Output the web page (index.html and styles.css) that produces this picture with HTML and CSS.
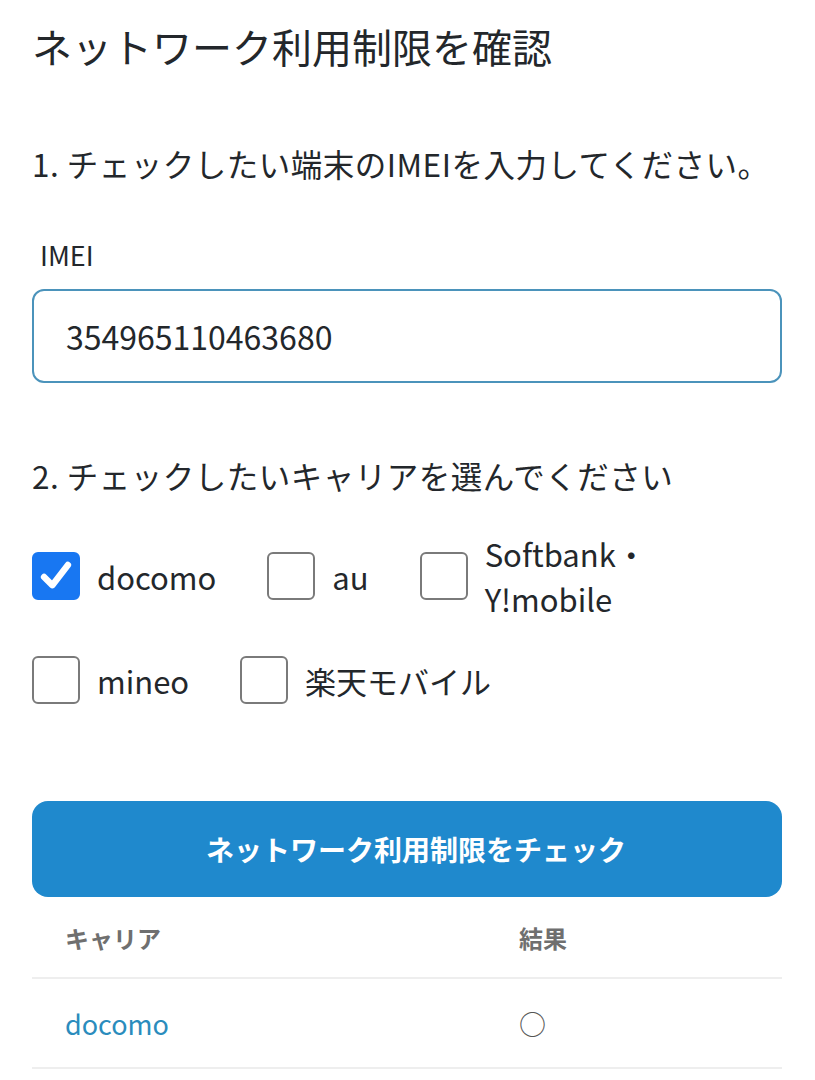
FILE: index.html
```html
<!DOCTYPE html>
<html lang="ja">
<head>
<meta charset="utf-8">
<title>ネットワーク利用制限を確認</title>
<link rel="stylesheet" href="styles.css">
</head>
<body>
<main class="page">
  <h1 class="title">ネットワーク利用制限を確認</h1>

  <h2 class="step">1. チェックしたい端末のIMEIを入力してください。</h2>
  <label class="field-label" for="imei">IMEI</label>
  <div class="input">354965110463680</div>

  <h2 class="step step-2">2. チェックしたいキャリアを選んでください</h2>

  <div class="carriers">
    <div class="carrier">
      <span class="box checked">
        <svg viewBox="0 0 48 48" width="48" height="48"><path d="M11 25 L20 34 L37 12" fill="none" stroke="#fff" stroke-width="7" stroke-linecap="round" stroke-linejoin="round"/></svg>
      </span>
      <span class="clabel">docomo</span>
    </div>
    <div class="carrier">
      <span class="box"></span>
      <span class="clabel">au</span>
    </div>
    <div class="carrier">
      <span class="box"></span>
      <span class="clabel multi">Softbank・<br>Y!mobile</span>
    </div>
  </div>
  <div class="carriers row-2">
    <div class="carrier">
      <span class="box"></span>
      <span class="clabel">mineo</span>
    </div>
    <div class="carrier">
      <span class="box"></span>
      <span class="clabel">楽天モバイル</span>
    </div>
  </div>

  <div class="button">ネットワーク利用制限をチェック</div>

  <table class="results">
    <thead>
      <tr><th class="col-carrier">キャリア</th><th>結果</th></tr>
    </thead>
    <tbody>
      <tr><td class="carrier-name">docomo</td><td class="mark">○</td></tr>
    </tbody>
  </table>
</main>
</body>
</html>
```

FILE: styles.css
```css
* { box-sizing: border-box; }

html, body {
  margin: 0;
  padding: 0;
  background: #ffffff;
}

body {
  font-family: "Noto Sans CJK JP", "Noto Sans", sans-serif;
  color: #23272b;
}

.page {
  padding: 22px 33px 0 32px;
}

.title {
  margin: 0;
  font-size: 40px;
  font-weight: 400;
  line-height: 48px;
  letter-spacing: 0;
}

.step {
  margin: 71px 0 0;
  font-size: 31.5px;
  font-weight: 400;
  line-height: 44px;
  letter-spacing: 0.5px;
}

.step-2 {
  margin-top: 70px;
}

.field-label {
  display: block;
  margin: 52px 0 0 8px;
  font-size: 27px;
  line-height: 36px;
}

.input {
  margin-top: 16px;
  height: 94px;
  border: 2px solid #4b93bb;
  border-radius: 12px;
  padding: 0 32px;
  display: flex;
  align-items: center;
  font-size: 32px;
}

.carriers {
  display: flex;
  align-items: center;
  gap: 51px;
  margin-top: 34px;
}

.row-2 {
  margin-top: 35px;
}

.carrier {
  display: flex;
  align-items: center;
  gap: 17px;
}

.box {
  width: 48px;
  height: 48px;
  border: 2px solid #7a7a7a;
  border-radius: 6px;
  flex: none;
  display: flex;
  align-items: center;
  justify-content: center;
  background: #fff;
}

.box.checked {
  background: #1877f2;
  border-color: #1877f2;
}

.box svg {
  display: block;
}

.clabel {
  font-size: 31px;
  line-height: 45px;
}

.button {
  margin-top: 97px;
  height: 96px;
  border-radius: 16px;
  background: #1f89cd;
  color: #ffffff;
  font-size: 28px;
  font-weight: 700;
  padding-left: 18px;
  display: flex;
  align-items: center;
  justify-content: center;
}

.results {
  width: 100%;
  border-collapse: collapse;
  margin-top: 0;
}

.results th {
  text-align: left;
  font-size: 24px;
  font-weight: 700;
  color: #6f6f6f;
  height: 81px;
  padding: 0 0 0 33px;
  border-bottom: 2px solid #eeeeee;
}

.results th.col-carrier {
  width: 454px;
}

.results td {
  height: 90px;
  padding: 0 0 0 33px;
  font-size: 27px;
  border-bottom: 2px solid #eeeeee;
}

.carrier-name {
  color: #2a8cbd;
}

.mark {
  color: #555;
  font-size: 26px;
}
```
